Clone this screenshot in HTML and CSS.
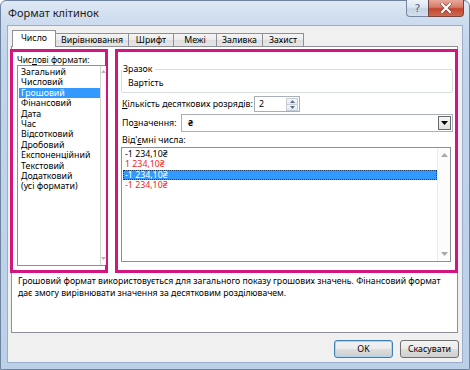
FILE: index.html
```html
<!DOCTYPE html>
<html>
<head>
<meta charset="utf-8">
<link rel="stylesheet" href="styles.css">
</head>
<body>
<div class="window">
  <div class="titlebar">
    <span class="title">Формат клітинок</span>
    <div class="caption-btns">
      <div class="cbtn help">?</div>
      <div class="cbtn close">
        <svg width="12" height="10" viewBox="0 0 12 10"><path d="M2 1 L10 9 M10 1 L2 9" stroke="#3a1f1f" stroke-width="3.4" stroke-linecap="square" opacity="0.55"/><path d="M2 1 L10 9 M10 1 L2 9" stroke="#fff" stroke-width="2.2" stroke-linecap="square"/></svg>
      </div>
    </div>
  </div>
  <div class="client">
    <div class="tabs">
      <div class="tab active w1">Число</div>
      <div class="tab w2">Вирівнювання</div>
      <div class="tab w3">Шрифт</div>
      <div class="tab w4">Межі</div>
      <div class="tab w5">Заливка</div>
      <div class="tab w6">Захист</div>
    </div>
    <div class="page">
      <div class="cols">
        <div class="hl left">
          <div class="lbl">Чис<u>л</u>ові формати:</div>
          <div class="list fmt">
            <div class="items">
              <div class="item">Загальний</div>
              <div class="item">Числовий</div>
              <div class="item sel">Грошовий</div>
              <div class="item">Фінансовий</div>
              <div class="item">Дата</div>
              <div class="item">Час</div>
              <div class="item">Відсотковий</div>
              <div class="item">Дробовий</div>
              <div class="item">Експоненційний</div>
              <div class="item">Текстовий</div>
              <div class="item">Додатковий</div>
              <div class="item">(усі формати)</div>
            </div>
            <div class="vscroll">
              <svg class="arr" width="5" height="3" viewBox="0 0 5 3"><polygon points="0,3 2.5,0 5,3" fill="#b5b5b5"/></svg>
              <svg class="arr" width="5" height="3" viewBox="0 0 5 3"><polygon points="0,0 2.5,3 5,0" fill="#b5b5b5"/></svg>
            </div>
          </div>
        </div>
        <div class="hl right">
          <fieldset class="sample">
            <legend>Зразок</legend>
            <div class="sample-val">Вартість</div>
          </fieldset>
          <div class="row">
            <span class="rlabel dec"><u>К</u>ількість десяткових розрядів:</span>
            <div class="spin">
              <span class="spin-val">2</span>
              <div class="spin-btns">
                <div class="sbtn"><svg width="5" height="3" viewBox="0 0 5 3"><polygon points="0,3 2.5,0 5,3" fill="#5a6f8c"/></svg></div>
                <div class="sbtn"><svg width="5" height="3" viewBox="0 0 5 3"><polygon points="0,0 2.5,3 5,0" fill="#5a6f8c"/></svg></div>
              </div>
            </div>
          </div>
          <div class="row row2">
            <span class="rlabel sym">По<u>з</u>начення:</span>
            <div class="combo">
              <span class="combo-val">₴</span>
              <div class="dd"><svg width="7" height="4" viewBox="0 0 7 4"><polygon points="0,0 3.5,4 7,0" fill="#000"/></svg></div>
            </div>
          </div>
          <div class="neglbl">Від'<u>є</u>мні числа:</div>
          <div class="list neg">
            <div class="items">
              <div class="item">-1 234,10₴</div>
              <div class="item red">1 234,10₴</div>
              <div class="item sel focus">-1 234,10₴</div>
              <div class="item red">-1 234,10₴</div>
            </div>
            <div class="vscroll wide">
              <svg class="arr" width="7" height="4" viewBox="0 0 7 4"><polygon points="0,4 3.5,0 7,4" fill="#a8a8a8"/></svg>
              <svg class="arr" width="7" height="4" viewBox="0 0 7 4"><polygon points="0,0 3.5,4 7,0" fill="#a8a8a8"/></svg>
            </div>
          </div>
        </div>
      </div>
      <div class="desc">Грошовий формат використовується для загального показу грошових значень. Фінансовий формат<br>дає змогу вирівнювати значення за десятковим розділювачем.</div>
    </div>
    <div class="buttons">
      <div class="btn default">OK</div>
      <div class="btn">Скасувати</div>
    </div>
  </div>
</div>
</body>
</html>
```

FILE: styles.css
```css
html, body {
  margin: 0;
  padding: 0;
  width: 470px;
  height: 370px;
  overflow: hidden;
  background: #ffffff;
}

body {
  font-family: "Noto Sans", "Open Sans", sans-serif;
  font-size: 8.8px;
  color: #000;
}

u { text-decoration: underline; text-underline-offset: 1px; }

.window {
  width: 470px;
  height: 370px;
  box-sizing: border-box;
  border: 1px solid #6f849f;
  border-radius: 6px 6px 0 0;
  background: linear-gradient(180deg, #dfe9f5 0px, #cddcee 20px, #c1d4ea 60px, #bcd0e8 100%);
  display: flex;
  flex-direction: column;
}

.titlebar {
  height: 24px;
  display: flex;
  align-items: center;
  padding-left: 7px;
}

.title {
  font-size: 11px;
  color: #1b1b1b;
  margin-top: -1px;
}

.caption-btns {
  margin-left: auto;
  margin-right: 5px;
  align-self: flex-start;
  margin-top: -1px;
  display: flex;
  height: 18px;
}

.cbtn {
  height: 17px;
  box-sizing: border-box;
  display: flex;
  align-items: center;
  justify-content: center;
}

.help {
  width: 22px;
  border: 1px solid #75879e;
  border-top: none;
  border-right: none;
  border-radius: 0 0 0 4px;
  background: linear-gradient(180deg, #eef3f9 0%, #dce5f0 45%, #c5d3e4 55%, #d3dfec 100%);
  color: #4f6682;
  font-size: 11px;
  font-family: "DejaVu Sans", sans-serif;
}

.close {
  width: 36px;
  border: 1px solid #75453e;
  border-top: none;
  border-radius: 0 0 4px 0;
  background: linear-gradient(180deg, #e9a99c 0%, #d77a67 45%, #c4452f 55%, #d0694f 100%);
}

.client {
  flex: 1;
  margin: 0 6px 6px 6px;
  border: 1px solid #99aecb;
  background: #f0f0f0;
  padding: 4px 4px 0 3px;
  display: flex;
  flex-direction: column;
}

.tabs {
  display: flex;
  height: 16px;
  padding-left: 1px;
  position: relative;
  z-index: 1;
}

.tab {
  height: 13px;
  margin-top: 3px;
  box-sizing: border-box;
  border: 1px solid #8d9099;
  border-bottom: none;
  margin-left: -1px;
  background: linear-gradient(180deg, #f4f4f4 0%, #ebebeb 50%, #dedede 51%, #e6e6e6 100%);
  display: flex;
  align-items: center;
  justify-content: center;
  line-height: 11px;
  white-space: nowrap;
}

.tab:first-child { margin-left: 0; }

.tab.active {
  height: 17px;
  margin-top: 0;
  background: #ffffff;
  padding-bottom: 1px;
}

.w1 { width: 44px; }
.w2 { width: 74px; }
.w3 { width: 46px; }
.w4 { width: 44px; }
.w5 { width: 47px; }
.w6 { width: 42px; }

.page {
  height: 287px;
  box-sizing: border-box;
  border: 1px solid #8d9099;
  background: #ffffff;
  display: flex;
  flex-direction: column;
}

.cols {
  display: flex;
  margin: 2px -1px 0 -2px;
  gap: 7px;
  height: 224px;
}

.hl {
  border: 3px solid #d5157f;
  box-sizing: border-box;
  height: 224px;
}

.left {
  width: 98px;
  display: flex;
  flex-direction: column;
}

.right {
  flex: 1;
  display: flex;
  flex-direction: column;
}

.lbl {
  line-height: 11px;
  padding: 2px 0 0 4px;
  white-space: nowrap;
  font-size: 8.4px;
}

.list {
  border: 1px solid #8b8f97;
  background: #fff;
  display: flex;
  box-sizing: border-box;
}

.fmt {
  margin-left: 4px;
  height: 201px;
  margin-top: 0;
}

.items {
  flex: 1;
  padding-top: 1px;
}

.item {
  line-height: 10.4px;
  height: 10.4px;
  padding-left: 2px;
  white-space: nowrap;
}

.fmt .items {
  padding-left: 1px;
  flex: none;
  width: 81px;
}

.fmt .item { padding-left: 2px; }

.item.sel {
  background: #3399ff;
  color: #fff;
}

.item.red { color: #ee1c25; }

.item.focus {
  outline: 1px dotted #1b3d6a;
  outline-offset: -1px;
}

.vscroll {
  border-left: 1px solid #d6d6d6;
  background: #fcfcfc;
  display: flex;
  flex-direction: column;
  justify-content: space-between;
  align-items: center;
  padding: 4px 0 5px;
  flex: 1;
}

.vscroll.wide {
  flex: none;
  width: 12px;
  border-left: 1px solid #ececec;
  padding: 5px 0 5px;
}

.sample {
  margin: 12px 2px 0 3px;
  padding: 0 0 1px 6px;
  border: 1px solid #d8dde3;
  border-radius: 2px;
  height: 29px;
  box-sizing: border-box;
}

.sample legend {
  padding: 0 2px 0 1px;
  margin-left: -6px;
  line-height: 11px;
  background: #fff;
}

.sample-val {
  line-height: 11px;
  padding-top: 3px;
}

.row {
  display: flex;
  align-items: center;
  margin-top: 3px;
  padding-left: 4px;
  height: 16px;
}

.row2 {
  margin-top: 2px;
  height: 18px;
}

.rlabel { white-space: nowrap; }
.dec { width: 132px; }
.sym { width: 59px; }

.spin {
  width: 46px;
  height: 16px;
  box-sizing: border-box;
  border: 1px solid #a9afba;
  background: #fff;
  display: flex;
  align-items: center;
}

.spin-val {
  flex: 1;
  padding-left: 4px;
}

.spin-btns {
  width: 12px;
  height: 13px;
  display: flex;
  flex-direction: column;
  margin-right: 1px;
}

.sbtn {
  flex: 1;
  border: 1px solid #c6cdd6;
  background: linear-gradient(180deg, #f5f7fa, #e4e9ef);
  display: flex;
  align-items: center;
  justify-content: center;
  box-sizing: border-box;
}

.sbtn + .sbtn { border-top: none; }

.combo {
  width: 272px;
  height: 18px;
  box-sizing: border-box;
  border: 1px solid #a9afba;
  background: #fff;
  display: flex;
  align-items: center;
}

.combo-val {
  flex: 1;
  padding-left: 6px;
  font-weight: bold;
}

.dd {
  width: 13px;
  height: 14px;
  box-sizing: border-box;
  border: 1px solid #6a6a6a;
  background: linear-gradient(180deg, #f6f6f6, #e0e0e0);
  margin-right: 1px;
  display: flex;
  align-items: center;
  justify-content: center;
}

.neglbl {
  line-height: 11px;
  margin-top: 3px;
  padding-left: 4px;
}

.neg {
  margin: 1px 0 0 3px;
  width: 330px;
  height: 115px;
}

.neg .items { padding-left: 1px; }
.neg .item { padding-left: 2px; width: 312px; }

.desc {
  padding: 3px 0 0 6px;
  line-height: 11.5px;
  font-size: 8.7px;
  white-space: nowrap;
  overflow: hidden;
}

.buttons {
  display: flex;
  justify-content: flex-end;
  gap: 7px;
  margin-top: 7px;
  margin-right: -1px;
}

.btn {
  width: 59px;
  height: 18px;
  box-sizing: border-box;
  border: 1px solid #707070;
  border-radius: 3px;
  background: linear-gradient(180deg, #f2f2f2 0%, #ebebeb 50%, #dddddd 51%, #cfcfcf 100%);
  display: flex;
  align-items: center;
  justify-content: center;
}

.btn.default {
  border-color: #3c7fb1;
  box-shadow: inset 0 0 0 1px #a6d6f2;
}
```
